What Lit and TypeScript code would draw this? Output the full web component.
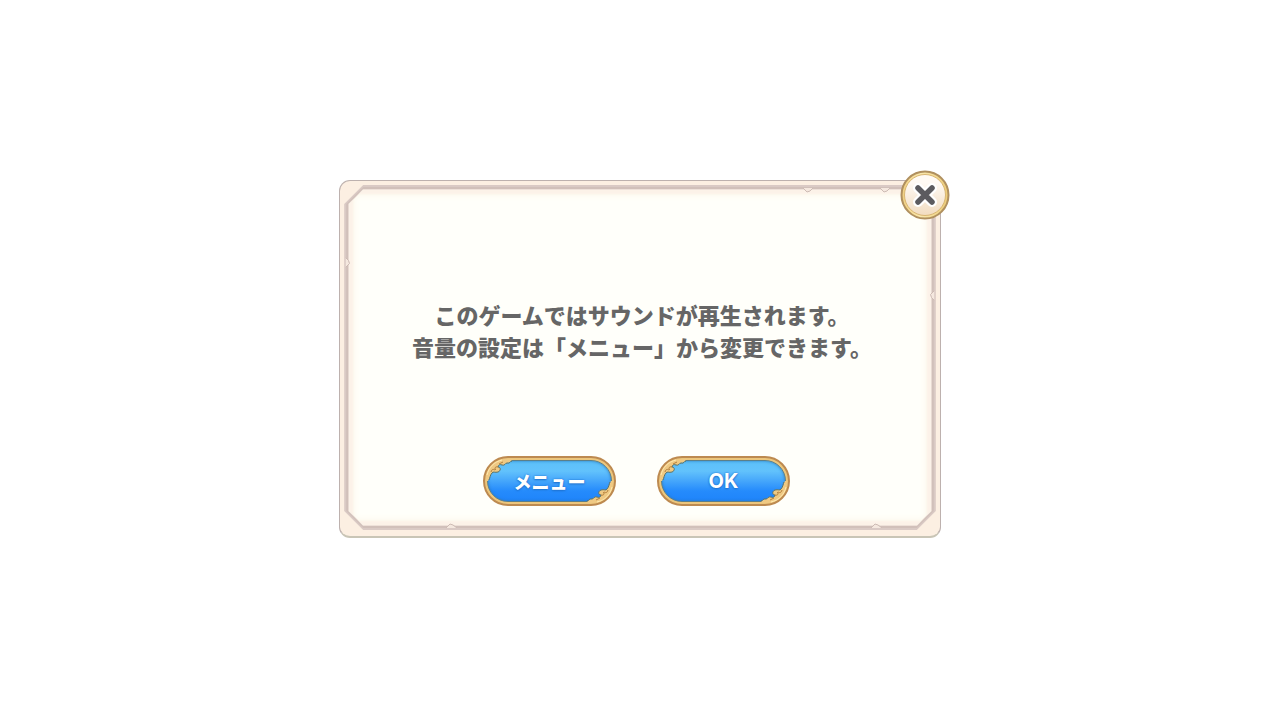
import { LitElement, html, css, svg } from "lit";
import { customElement, property } from "lit/decorators.js";

@customElement("ornate-button")
class OrnateButton extends LitElement {
  @property() label = "";

  static styles = css`
    :host { display: block; }
    button {
      position: relative;
      display: grid;
      place-items: center;
      width: 133px;
      height: 50px;
      padding: 0;
      border: 2px solid #bd8a50;
      border-radius: 25px;
      background: #ecc67c;
      cursor: pointer;
    }
    .face {
      display: grid;
      place-items: center;
      box-sizing: border-box;
      width: 125px;
      height: 42px;
      border: 1px solid #5c7f88;
      border-radius: 21px;
      background: linear-gradient(#5cc0f8 0%, #62c2fc 25%, #45a6fb 50%, #258bfc 75%, #1f84fa 100%);
      box-shadow: inset 0 0 3px #2879c4;
      color: #fff;
      font: 900 18px/24px "Noto Sans CJK JP", sans-serif;
      text-shadow: 0 0 2px #1f72cf, 0 1px 2px #1f72cf;
    }
    .latin { font: 700 20px/24px Inter, sans-serif; }
    .scroll { position: absolute; width: 30px; height: 24px; }
    .start { left: 0; top: 0; }
    .end { right: 0; bottom: 0; transform: rotate(180deg); }
  `;

  private scroll(side: string) {
    return html`<svg class="scroll ${side}" viewBox="0 0 30 24" aria-hidden="true">
      ${svg`<path d="M1 23C1 9 10 1 22 1H29C26 2 25 5 22 5C20 5 20 8 17 7C15 6 13 7 13 9C16 9 16 13 13 14C10 15 8 13 7 15C5 17 5 20 3 23Z" fill="#efc983"/>
      <path d="M27 3C25 3 25 6 22 5C20 5 20 8 17 7C15 6 13 7 13 9C16 9 16 13 13 14C10 15 8 13 7 15C5 17 5 20 4 22" fill="none" stroke="#5d7368"/>
      <path d="M13 9C10 8 9 11 11 12M6 14C7 11 8 11 10 12M14 6L18 4" fill="none" stroke="#b37f3c"/>
      <path d="M2 17C4 9 9 4 17 2" fill="none" stroke="#ffe9b0"/>`}
    </svg>`;
  }

  render() {
    const latin = /^[A-Za-z]+$/.test(this.label);
    return html`<button type="button">
      <span class="face ${latin ? "latin" : ""}">${this.label}</span>
      ${this.scroll("start")}${this.scroll("end")}
    </button>`;
  }
}

@customElement("app-root")
class AppRoot extends LitElement {
  static styles = css`
    :host {
      display: grid;
      place-items: center;
      box-sizing: border-box;
      min-height: 100vh;
      padding-bottom: 2px;
      background: #fff;
    }
    .dialog {
      position: relative;
      box-sizing: border-box;
      width: 47vw;
      min-width: 500px;
      padding: 4px 4px 6px;
      border: 1px solid #bdb1ae;
      border-bottom: 2px solid #c9c5b6;
      border-radius: 11px;
      background: #fcefe2;
    }
    .rim, .trim, .bevel, .page {
      clip-path: polygon(var(--cut) 0, calc(100% - var(--cut)) 0, 100% var(--cut), 100% calc(100% - var(--cut)), calc(100% - var(--cut)) 100%, var(--cut) 100%, 0 calc(100% - var(--cut)), 0 var(--cut));
    }
    .rim { --cut: 19px; padding: 2px; background: #dacac5; }
    .trim { --cut: 17px; padding: 2px; background: #d1c0ba; }
    .bevel { --cut: 15px; padding: 1px; background: #eee1d9; }
    .page {
      --cut: 14px;
      display: flex;
      flex-direction: column;
      align-items: center;
      padding: 108px 0 19px;
      background: #fffffa;
      box-shadow: inset 0 0 2px 4px #fcf2e8, inset 0 0 7px 5px #fcf6ea;
    }
    p {
      margin: 0;
      padding-left: 4px;
      color: #666;
      font: 900 22px/32px "Noto Sans CJK JP", sans-serif;
      text-align: center;
      white-space: nowrap;
    }
    .actions { display: flex; gap: 41px; margin-top: 94px; padding-right: 7px; }
    .mark { position: absolute; width: 14px; height: 5px; }
    .mark path { fill: #f5e8df; stroke: #cdbbb4; }
    .top1 { left: 461px; top: 7px; }
    .top2 { left: 538px; top: 7px; }
    .low1 { left: 105px; bottom: 8px; }
    .low2 { right: 56px; bottom: 8px; }
    .left { left: 1px; top: 79px; transform: rotate(-90deg); }
    .right { right: 1px; top: 112px; transform: rotate(90deg); }
    .close {
      position: absolute;
      top: -11px;
      right: -10px;
      width: 50px;
      height: 50px;
      padding: 0;
      border: 0;
      border-radius: 25px;
      background: none;
      cursor: pointer;
    }
    .close svg { display: block; }
  `;

  render() {
    return html`
      <section class="dialog" role="dialog" aria-labelledby="message">
        <div class="rim"><div class="trim"><div class="bevel"><div class="page">
          <p id="message">このゲームではサウンドが再生されます。<br>音量の設定は「メニュー」から変更できます。</p>
          <div class="actions">
            <ornate-button label="メニュー"></ornate-button>
            <ornate-button label="OK"></ornate-button>
          </div>
        </div></div></div></div>
        ${["top1", "top2", "left", "right"].map((side) => html`<svg class="mark ${side}" viewBox="0 0 14 5" aria-hidden="true"><path d="M2 0L6 4L9 3L12 0"/></svg>`)}
        ${["low1", "low2"].map((side) => html`<svg class="mark ${side}" viewBox="0 0 14 5" aria-hidden="true"><path d="M1 5L5 1L8 2L12 5"/></svg>`)}
        <button class="close" type="button" aria-label="閉じる">
          <svg width="50" height="50" viewBox="0 0 50 50" aria-hidden="true">
            <defs>
              <linearGradient id="plate" x1="0" y1="0" x2="0" y2="1">
                <stop offset="0.2" stop-color="#fffaf4"/><stop offset="1" stop-color="#f2dcc0"/>
              </linearGradient>
              <linearGradient id="ring" x1="0" y1="0" x2="1" y2="0">
                <stop offset="0" stop-color="#f0cf80"/><stop offset="0.4" stop-color="#fae9ae"/><stop offset="1" stop-color="#eccb78"/>
              </linearGradient>
            </defs>
            <circle cx="25" cy="25" r="23.5" fill="url(#ring)" stroke="#b0905f" stroke-width="2"/>
            <circle cx="25" cy="25" r="20.5" fill="url(#plate)" stroke="#d9b673"/>
            <path d="M18 18L32 32M32 18L18 32" fill="none" stroke="#fff" stroke-width="10" stroke-linecap="round"/>
            <path d="M18 18L32 32M32 18L18 32" fill="none" stroke="#5c5b5f" stroke-width="5.5" stroke-linecap="round"/>
          </svg>
        </button>
      </section>`;
  }
}
